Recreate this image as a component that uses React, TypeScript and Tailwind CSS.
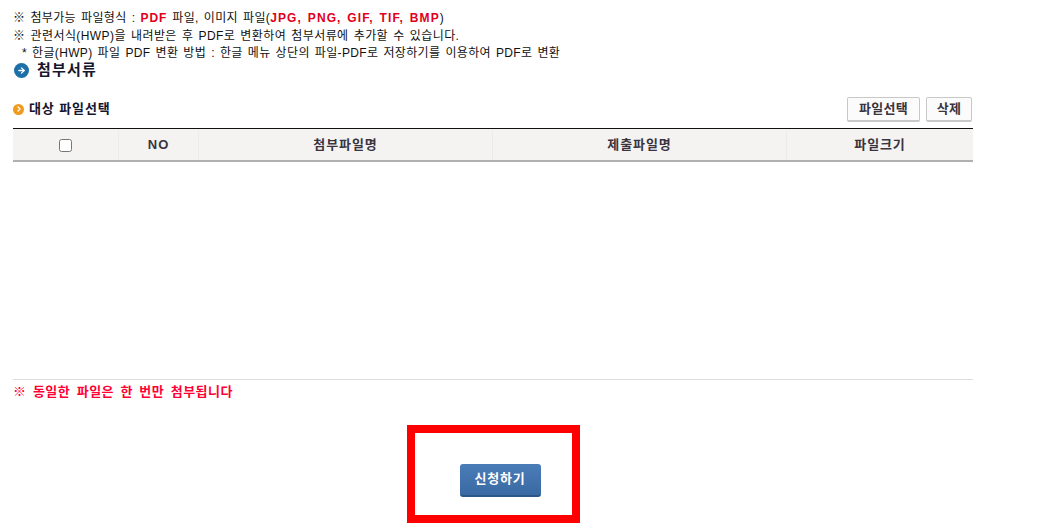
import { ArrowRight, ChevronRight } from "lucide-react";

const font = "font-['Liberation_Sans','Noto_Sans_CJK_KR',sans-serif]";

const columns = [
	{ label: "NO", width: "w-[80px]" },
	{ label: "첨부파일명", width: "w-[294px]" },
	{ label: "제출파일명", width: "w-[294px]" },
	{ label: "파일크기", width: "flex-1" },
];

function SmallButton({ label, width }: { label: string; width: string }) {
	return (
		<button className={`${width} h-[25px] rounded-[2px] border border-[#c8c8c8] border-b-2 bg-[#fbfbfb] text-[13px] font-bold tracking-[0.3px] text-[#3a3340]`}>
			{label}
		</button>
	);
}

export default function App() {
	return (
		<div className={`${font} h-[528px] w-[1039px] overflow-hidden bg-white pl-[13px] text-[#111]`}>
			<div className="w-[960px]">
				<div className="pt-[10px] text-[12px] leading-[17.5px] tracking-[0.35px] [word-spacing:1.4px]">
					<p>
						※ 첨부가능 파일형식 : <b className="tracking-[0.9px] text-[#e0001b]">PDF</b> 파일, 이미지 파일(
						<b className="tracking-[1.1px] text-[#e0001b]">JPG, PNG, GIF, TIF, BMP</b>)
					</p>
					<p className="tracking-[0.41px]">※ 관련서식(HWP)을 내려받은 후 PDF로 변환하여 첨부서류에 추가할 수 있습니다.</p>
					<p className="pl-[9px] tracking-[0.34px]">* 한글(HWP) 파일 PDF 변환 방법 : 한글 메뉴 상단의 파일-PDF로 저장하기를 이용하여 PDF로 변환</p>
				</div>

				<div className="flex h-[16px] items-center gap-[8px] pl-px">
					<span className="flex h-[15px] w-[15px] shrink-0 items-center justify-center rounded-full bg-[#1d6fa8]">
						<ArrowRight size={9} strokeWidth={3.5} className="text-white" />
					</span>
					<h2 className="text-[15px] font-bold tracking-[1.2px] text-[#15152e]">첨부서류</h2>
				</div>

				<div className="mt-[18px] flex h-[25px] items-center justify-between pr-px">
					<div className="flex items-center gap-[5px]">
						<span className="flex h-[11px] w-[11px] items-center justify-center rounded-full bg-[#f09a1e]">
							<ChevronRight size={8} strokeWidth={4} className="text-white" />
						</span>
						<h3 className="-mt-px text-[13px] font-bold tracking-[0.9px] text-[#15152e]">대상 파일선택</h3>
					</div>
					<div className="flex gap-[6px]">
						<SmallButton label="파일선택" width="w-[73px]" />
						<SmallButton label="삭제" width="w-[46px]" />
					</div>
				</div>

				<div className="mt-[6px] flex h-[34px] items-center border-t border-b-2 border-t-[#111] border-b-[#b0b0b0] bg-[#f4f3f1] pt-[2px] text-[13px] font-bold tracking-[0.9px] text-[#3a3340]">
					<div className="flex h-full w-[105px] items-center justify-center">
						<input type="checkbox" className="h-[13px] w-[13px]" />
					</div>
					{columns.map((col) => (
						<div key={col.label} className={`flex h-full items-center justify-center border-l border-[#ecebe8] ${col.width}`}>
							{col.label}
						</div>
					))}
				</div>

				<div className="h-[218px] border-b border-[#dddddd]" />

				<p className="mt-[3px] text-[13px] leading-[17px] font-bold tracking-[0.5px] text-[#ff0033] [word-spacing:2.3px]">※ 동일한 파일은 한 번만 첨부됩니다</p>

				{/* 빨간 표시 박스 */}
				<div className="mt-[25px] ml-[394px] flex h-[98px] w-[173px] items-start justify-center border-[8px] border-[#ff0000] pt-[31px] pl-[13px]">
					<button className="h-[33px] w-[81px] shrink-0 rounded-[3px] border-b-2 border-[#2b5688] bg-gradient-to-b from-[#4a7cb8] to-[#3a6aa3] text-[13px] font-bold tracking-[0.8px] text-white">
						신청하기
					</button>
				</div>
			</div>
		</div>
	);
}
